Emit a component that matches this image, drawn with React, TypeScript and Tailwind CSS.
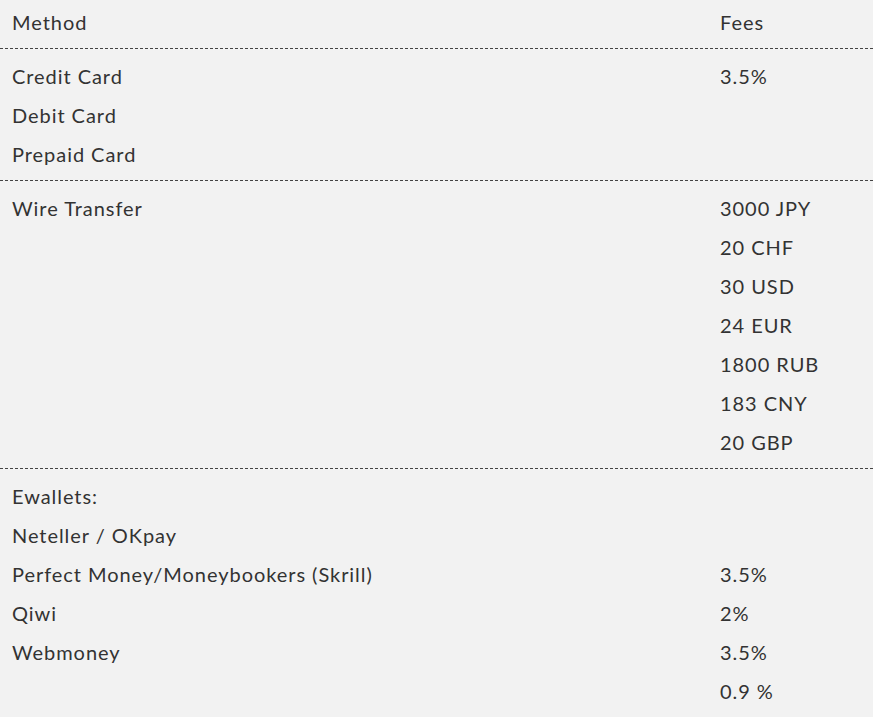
import React from "react";

const rows: { left: string[]; right: string[] }[] = [
  { left: ["Credit Card", "Debit Card", "Prepaid Card"], right: ["3.5%"] },
  {
    left: ["Wire Transfer"],
    right: ["3000 JPY", "20 CHF", "30 USD", "24 EUR", "1800 RUB", "183 CNY", "20 GBP"],
  },
  {
    left: ["Ewallets:", "Neteller / OKpay", "Perfect Money/Moneybookers (Skrill)", "Qiwi", "Webmoney"],
    right: ["", "", "3.5%", "2%", "3.5%", "0.9 %"],
  },
];

export default function App() {
  return (
    <div
      className="w-[873px] h-[717px] bg-[#f2f2f2] text-[#333333] text-[20px] leading-[39px] tracking-[0.95px] overflow-hidden"
      style={{ fontFamily: "Lato, 'Open Sans', sans-serif" }}
    >
      <div className="grid grid-cols-[708px_1fr] pt-[3px] pb-[6px]">
        <div className="px-3">Method</div>
        <div className="px-3">Fees</div>
      </div>
      {rows.map((r, i) => (
        <div key={i} className="grid grid-cols-[708px_1fr] border-t border-dashed border-[#444] pt-[8px] pb-[6px]">
          <div className="px-3">
            {r.left.map((t, j) => (
              <div key={j} className="h-[39px]">{t}</div>
            ))}
          </div>
          <div className="px-3">
            {r.right.map((t, j) => (
              <div key={j} className="h-[39px]">{t}</div>
            ))}
          </div>
        </div>
      ))}
    </div>
  );
}
